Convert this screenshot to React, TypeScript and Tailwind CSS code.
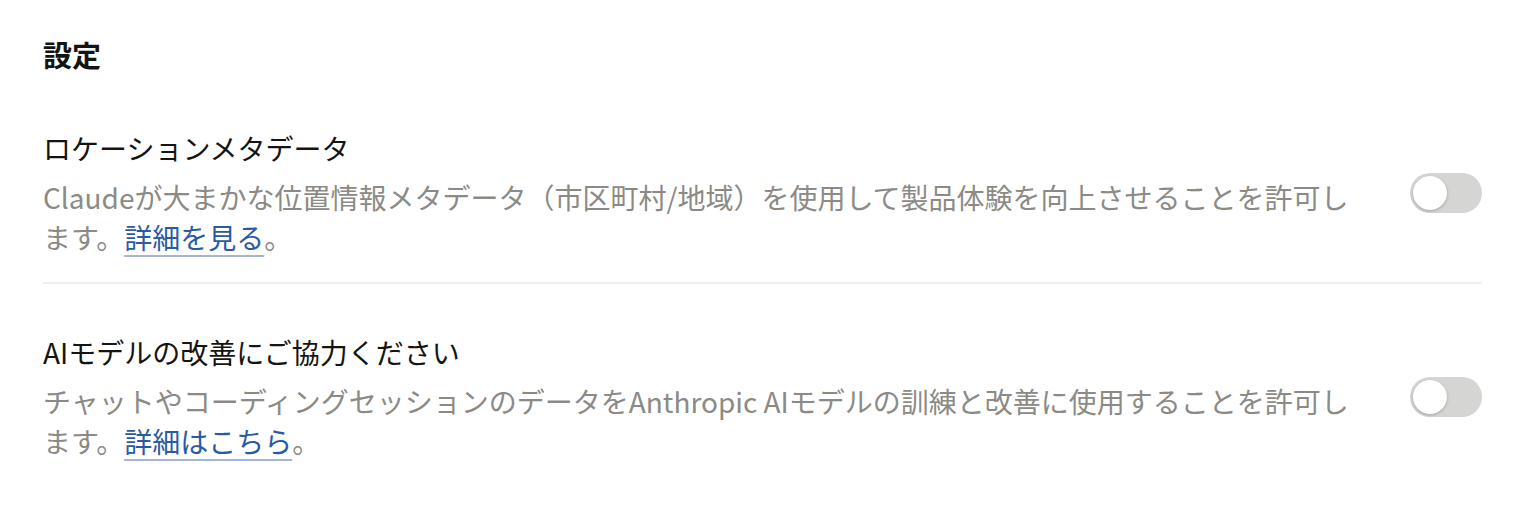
import { useState } from "react";

type Setting = {
  id: string;
  title: string;
  body: string;
  linkText: string;
};

const settings: Setting[] = [
  {
    id: "location",
    title: "ロケーションメタデータ",
    body: "Claudeが大まかな位置情報メタデータ（市区町村/地域）を使用して製品体験を向上させることを許可します。",
    linkText: "詳細を見る",
  },
  {
    id: "training",
    title: "AIモデルの改善にご協力ください",
    body: "チャットやコーディングセッションのデータをAnthropic AIモデルの訓練と改善に使用することを許可します。",
    linkText: "詳細はこちら",
  },
];

const Toggle = ({ on, onChange }: { on: boolean; onChange: () => void }) => (
  <button
    type="button"
    onClick={onChange}
    className={`relative h-[40px] w-[72px] shrink-0 rounded-full transition-colors ${
      on ? "bg-[#2c84db]" : "bg-[#d5d5d3]"
    }`}
  >
    <span
      className={`absolute top-[3px] h-[34px] w-[34px] rounded-full bg-white shadow-[0_1px_3px_rgba(0,0,0,0.25)] transition-all ${
        on ? "left-[35px]" : "left-[3px]"
      }`}
    />
  </button>
);

const App = () => {
  const [enabled, setEnabled] = useState<Record<string, boolean>>({});

  return (
    <div
      className="min-h-screen bg-white pl-[43px] pr-[46px] pt-[34px]"
      style={{ fontFamily: '"Noto Sans CJK JP", "Noto Sans", sans-serif' }}
    >
      <h1 className="text-[29px] font-bold leading-[40px] text-[#141413]">設定</h1>

      <div className="mt-[54px]">
        {settings.map((s, i) => (
          <div
            key={s.id}
            className={`flex items-center justify-between ${
              i === 0 ? "border-b-2 border-[#efefed] pb-[25px]" : "pt-[48px]"
            }`}
          >
            <div className="w-[1318px]">
              <h3 className="text-[28px] leading-[40px] text-[#141413]">{s.title}</h3>
              <p className="mt-[9px] text-[28px] leading-[40px] text-[#8b8a85]">
                {s.body}
                <a
                  href="#"
                  className="text-[#2b5aa3] underline decoration-[#a5b6d3] decoration-2 underline-offset-[6px]"
                >
                  {s.linkText}
                </a>
                。
              </p>
            </div>
            <Toggle
              on={!!enabled[s.id]}
              onChange={() => setEnabled((p) => ({ ...p, [s.id]: !p[s.id] }))}
            />
          </div>
        ))}
      </div>
    </div>
  );
};

export default App;
